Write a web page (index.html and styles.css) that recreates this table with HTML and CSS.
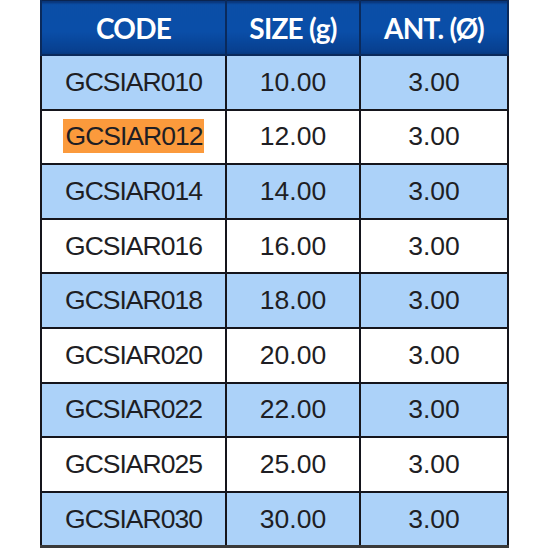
FILE: index.html
```html
<!DOCTYPE html>
<html lang="en">
<head>
<meta charset="utf-8">
<title>Sizes</title>
<link rel="stylesheet" href="styles.css">
</head>
<body>
<table class="sizes">
  <thead>
    <tr><th class="c-code">CODE</th><th class="c-size">SIZE (g)</th><th class="c-ant">ANT. (Ø)</th></tr>
  </thead>
  <tbody>
    <tr class="alt"><td class="code">GCSIAR010</td><td>10.00</td><td>3.00</td></tr>
    <tr><td class="code"><span class="mark">GCSIAR012</span></td><td>12.00</td><td>3.00</td></tr>
    <tr class="alt"><td class="code">GCSIAR014</td><td>14.00</td><td>3.00</td></tr>
    <tr><td class="code">GCSIAR016</td><td>16.00</td><td>3.00</td></tr>
    <tr class="alt"><td class="code">GCSIAR018</td><td>18.00</td><td>3.00</td></tr>
    <tr><td class="code">GCSIAR020</td><td>20.00</td><td>3.00</td></tr>
    <tr class="alt"><td class="code">GCSIAR022</td><td>22.00</td><td>3.00</td></tr>
    <tr><td class="code">GCSIAR025</td><td>25.00</td><td>3.00</td></tr>
    <tr class="alt last"><td class="code">GCSIAR030</td><td>30.00</td><td>3.00</td></tr>
  </tbody>
</table>
</body>
</html>
```
FILE: styles.css
```css
html, body {
  margin: 0;
  padding: 0;
  background: #ffffff;
}
body {
  padding-left: 40px;
}
.sizes {
  border-collapse: collapse;
  table-layout: fixed;
  width: 469px;
  font-family: "Liberation Sans", Arial, sans-serif;
}
.c-code { width: 183px; }
.c-size { width: 132px; }
.c-ant { width: 146px; }
.sizes th {
  height: 53px;
  padding: 0;
  color: #ffffff;
  font-family: "Lato", "Liberation Sans", sans-serif;
  font-weight: 700;
  font-size: 28px;
  letter-spacing: -0.8px;
  text-align: center;
  background: linear-gradient(to bottom, #0a2f70 0px, #0b4ea6 3px, #0a4ea8 30px, #073f8e 50px, #05326f 55px);
  border-top: 1px solid #0a2450;
  border-left: 2px solid #0a2a5c;
  border-right: 2px solid #0a2a5c;
  border-bottom: 2px solid #0a2a5c;
}
.sizes td {
  height: 52.6px;
  padding: 0;
  font-size: 26.5px;
  color: #1e1e24;
  text-align: center;
  border: 2px solid #15151c;
  background: #ffffff;
}
.sizes td.code {
  letter-spacing: -1px;
}
.sizes tr.alt td {
  background: #acd2f9;
}
.sizes tr.last td {
  border-bottom: 3px solid #3a3a3a;
}
.mark {
  background: #fb9a3c;
  padding: 2px 2px 2px 3px;
}
```
